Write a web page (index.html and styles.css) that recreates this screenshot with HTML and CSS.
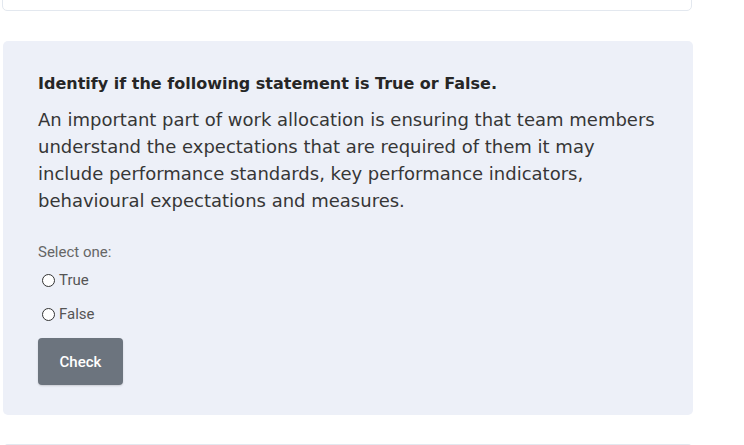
FILE: index.html
```html
<!DOCTYPE html>
<html>
<head>
<meta charset="utf-8">
<link rel="stylesheet" href="styles.css">
</head>
<body>
<div class="page">
  <div class="card-prev"></div>
  <div class="question">
    <h3 class="q-title">Identify if the following statement is True or False.</h3>
    <p class="q-text">An important part of work allocation is ensuring that team members understand the expectations that are required of them it may include performance standards, key performance indicators, behavioural expectations and measures.</p>
    <div class="answer">
      <div class="prompt">Select one:</div>
      <label class="opt"><span class="radio"></span>True</label>
      <label class="opt"><span class="radio"></span>False</label>
    </div>
    <button class="check">Check</button>
  </div>
  <div class="card-next"></div>
</div>
</body>
</html>
```
FILE: styles.css
```css
html, body { margin: 0; padding: 0; background: #fff; }
.page { width: 690px; margin-left: 3px; }
.card-prev {
  height: 40px; margin-top: -31px;
  border: 1.5px solid #e3e8ef; border-radius: 5px;
  background: #fff; margin-left: -1px; width: 688px;
}
.question {
  margin-top: 30px;
  background: #edf0f8;
  border-radius: 5px;
  padding: 32px 35px 29px 35px;
  height: 313px;
}
.q-title {
  margin: 0;
  font-family: "DejaVu Sans", sans-serif;
  font-weight: 700; font-size: 16px; line-height: 22px;
  color: #262626;
}
.q-text {
  margin: 11px 0 0;
  font-family: "DejaVu Sans", sans-serif;
  font-size: 18px; line-height: 27px; color: #363636;
}
.answer { margin-top: 27px; font-family: Roboto, sans-serif; }
.prompt { font-size: 15px; color: #666; line-height: 22px; }
.opt { display: flex; align-items: center; gap: 4px; font-size: 15px; color: #555; height: 34px; padding-left: 4px; }
.radio { width: 11px; height: 11px; border: 1px solid #333; border-radius: 50%; background: #fff; }
.check {
  margin-top: 7px;
  width: 85px; height: 47px;
  background: #6c747e; color: #fff; border: 0; border-radius: 4px;
  font-family: Roboto, sans-serif; font-size: 15px; font-weight: 500;
  box-shadow: 0 1px 2px rgba(0,0,0,.15);
}
.card-next {
  margin-top: 29px; height: 20px;
  border: 1.5px solid #e3e8ef; border-bottom: 0; border-radius: 5px 5px 0 0;
}
```
